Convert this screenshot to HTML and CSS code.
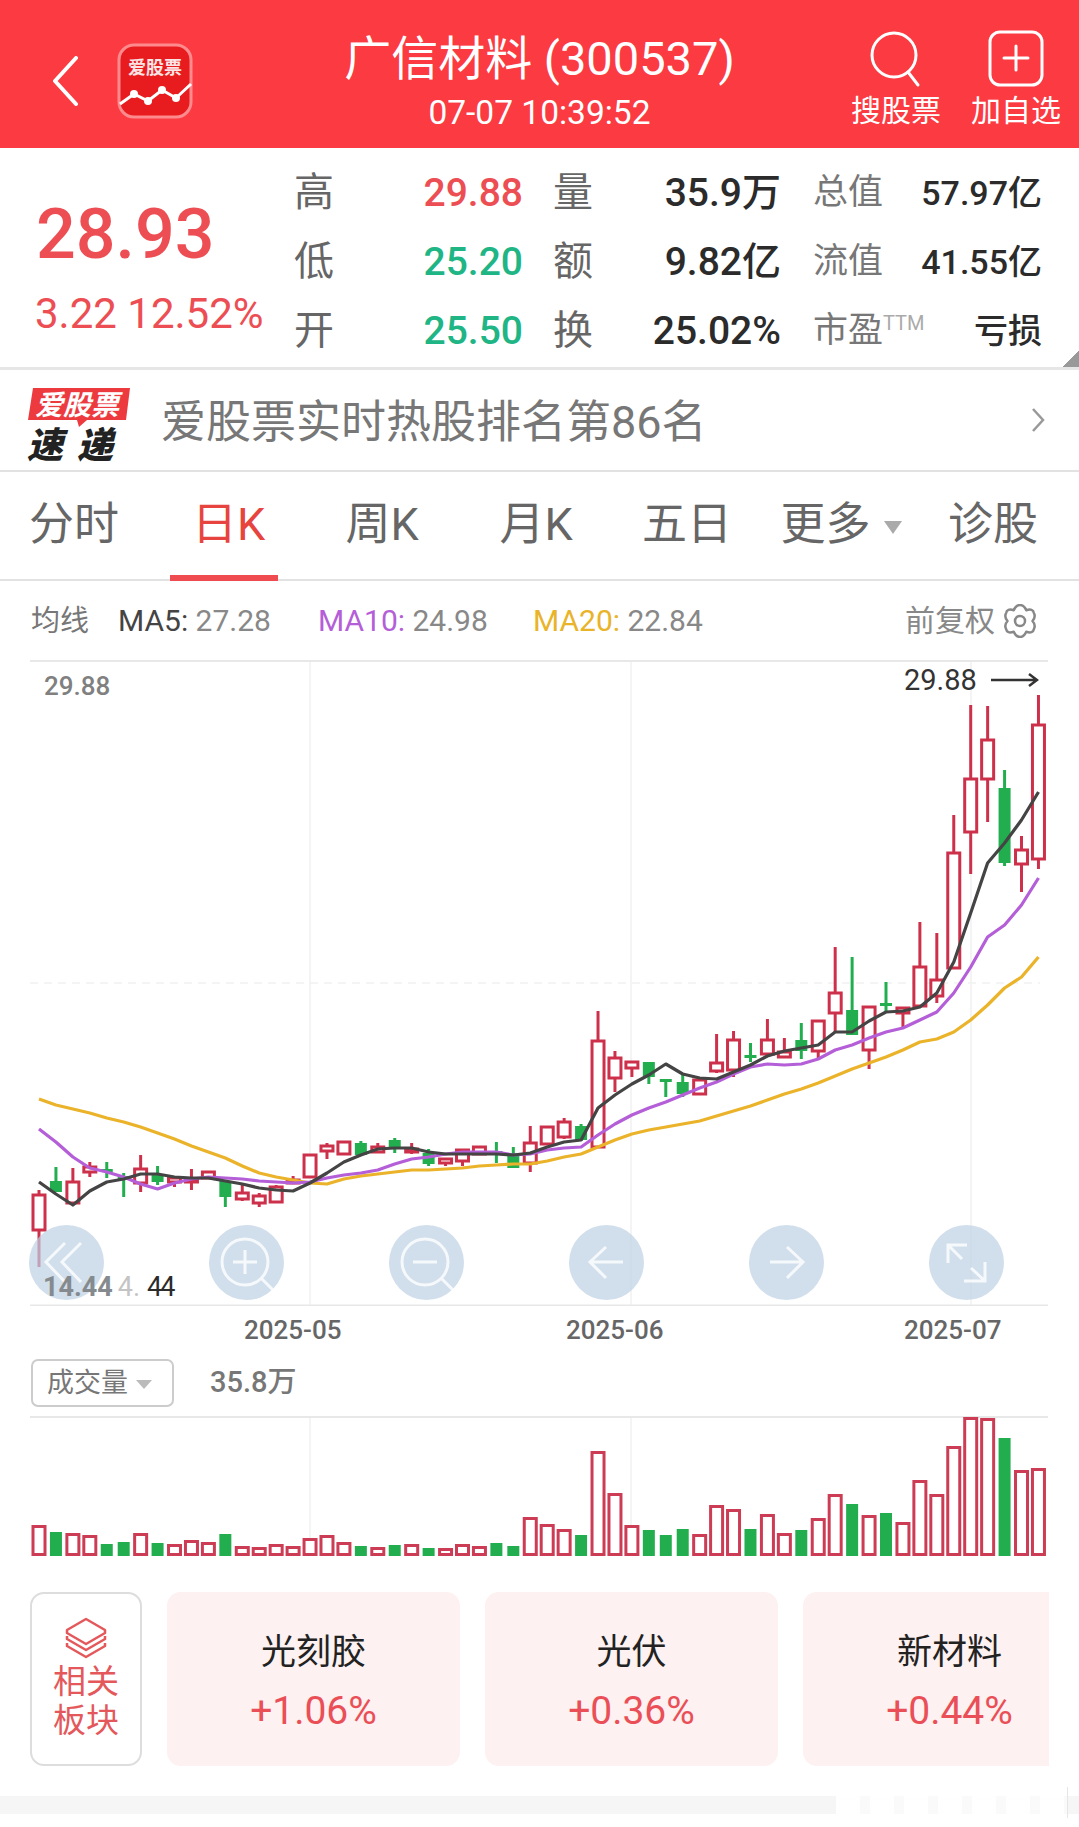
FILE: index.html
```html
<!DOCTYPE html>
<html lang="zh-CN">
<head>
  <meta charset="UTF-8" />
  <meta name="viewport" content="width=device-width, initial-scale=1.0"/>
  <title>广信材料 (300537)</title>
  <link rel="stylesheet" href="styles.css">
</head>
<body>
  <header class="topbar">
    <div class="topbar-left">
      <svg class="back" viewBox="0 0 26 50"><path d="M24 2 L3 25 L24 48"/></svg>
      <svg class="app-logo" viewBox="0 0 76 76">
        <rect class="app-logo-bg" x="2" y="2" width="72" height="72" rx="15"/>
        <text class="app-logo-text" x="38" y="31">爱股票</text>
        <polyline class="app-logo-line" points="3,61 17,51 31,58 45,47 59,55 74,41"/>
        <circle class="app-logo-dot" cx="17" cy="51" r="4"/>
        <circle class="app-logo-dot" cx="31" cy="58" r="4"/>
        <circle class="app-logo-dot" cx="45" cy="47" r="4"/>
        <circle class="app-logo-dot" cx="59" cy="55" r="4"/>
      </svg>
    </div>
    <div class="topbar-title">
      <div class="stock-name">广信材料 (300537)</div>
      <div class="stock-time">07-07 10:39:52</div>
    </div>
    <div class="topbar-actions">
      <div class="action">
        <svg class="action-icon" viewBox="0 0 60 60"><circle cx="28" cy="26" r="22"/><path d="M42 43 L52 56"/></svg>
        <span>搜股票</span>
      </div>
      <div class="action">
        <svg class="action-icon" viewBox="0 0 60 60"><rect x="4" y="3" width="52" height="53" rx="10"/><path d="M30 17 V41 M18 29 H42"/></svg>
        <span>加自选</span>
      </div>
    </div>
  </header>

  <section class="quote">
    <div class="quote-main">
      <div class="price">28.93</div>
      <div class="change">3.22 12.52%</div>
    </div>
    <div class="quote-grid">
      <div class="cell"><span class="lbl">高</span><span class="val up">29.88</span></div>
      <div class="cell"><span class="lbl">量</span><span class="val">35.9万</span></div>
      <div class="cell small"><span class="lbl">总值</span><span class="val">57.97亿</span></div>
      <div class="cell"><span class="lbl">低</span><span class="val down">25.20</span></div>
      <div class="cell"><span class="lbl">额</span><span class="val">9.82亿</span></div>
      <div class="cell small"><span class="lbl">流值</span><span class="val">41.55亿</span></div>
      <div class="cell"><span class="lbl">开</span><span class="val down">25.50</span></div>
      <div class="cell"><span class="lbl">换</span><span class="val">25.02%</span></div>
      <div class="cell small"><span class="lbl">市盈<sup>TTM</sup></span><span class="val">亏损</span></div>
    </div>
    <div class="corner"></div>
  </section>

  <section class="hot">
    <svg class="hot-logo" viewBox="0 0 104 84">
      <path class="hot-bubble" d="M6 0 H103 L99 32 H60 L52 39 L50 32 H1 Z"/>
      <text class="hot-brand" x="8" y="27">爱股票</text>
      <text class="hot-brand-black" x="0" y="70">速</text>
      <text class="hot-brand-black" x="50" y="70">递</text>
    </svg>
    <div class="hot-text">爱股票实时热股排名第86名</div>
    <svg class="hot-arrow" viewBox="0 0 16 26"><path d="M3 2 L13 13 L3 24"/></svg>
  </section>

  <nav class="tabs">
    <div class="tab">分时</div>
    <div class="tab active">日K</div>
    <div class="tab">周K</div>
    <div class="tab">月K</div>
    <div class="tab">五日</div>
    <div class="tab">更多<i class="tab-caret"></i></div>
    <div class="tab">诊股</div>
  </nav>

  <div class="legend">
    <span class="legend-title">均线</span>
    <span class="legend-item ma5">MA5: <b>27.28</b></span>
    <span class="legend-item ma10">MA10: <b>24.98</b></span>
    <span class="legend-item ma20">MA20: <b>22.84</b></span>
    <span class="legend-adjust">前复权
      <svg class="gear" viewBox="0 0 34 34"><path d="M10.75 6.2 Q13 1 17 1 Q21 1 23.25 6.2 Q30 4 30.9 9 Q33 13 29.5 17 Q33 21 30.9 25 Q30 30 23.25 27.8 Q21 33 17 33 Q13 33 10.75 27.8 Q4 30 3.1 25 Q1 21 4.5 17 Q1 13 3.1 9 Q4 4 10.75 6.2 Z"/><circle cx="17" cy="17" r="5"/></svg>
    </span>
  </div>

  <section class="chart">
    <svg id="kline" class="chart-svg" viewBox="0 660 1079 646"></svg>
    <span class="chart-high">29.88</span>
    <span class="chart-max">29.88
      <svg class="max-arrow" viewBox="0 0 48 14"><path d="M0 7 H46 M38 1 L46 7 L38 13"/></svg>
    </span>
    <div class="chart-tools">
      <svg class="tool" viewBox="0 0 75 75"><circle class="tool-bg" cx="37.5" cy="37.5" r="37.5"/><path d="M36 18 L17 37 L36 57 M52 18 L33 37 L52 57"/></svg>
      <svg class="tool" viewBox="0 0 75 75"><circle class="tool-bg" cx="37.5" cy="37.5" r="37.5"/><circle cx="36" cy="37" r="23"/><path d="M24 37 H48 M36 25 V49 M53 54 L65 66"/></svg>
      <svg class="tool" viewBox="0 0 75 75"><circle class="tool-bg" cx="37.5" cy="37.5" r="37.5"/><circle cx="36" cy="37" r="23"/><path d="M24 37 H48 M53 54 L65 66"/></svg>
      <svg class="tool" viewBox="0 0 75 75"><circle class="tool-bg" cx="37.5" cy="37.5" r="37.5"/><path d="M37 22 L21 37 L37 53 M21 37 H54"/></svg>
      <svg class="tool" viewBox="0 0 75 75"><circle class="tool-bg" cx="37.5" cy="37.5" r="37.5"/><path d="M38 22 L54 37 L38 53 M54 37 H21"/></svg>
      <svg class="tool" viewBox="0 0 75 75"><circle class="tool-bg" cx="37.5" cy="37.5" r="37.5"/><path d="M38 20 H19 V38 M19 20 L33 34 M35 56 H56 V37 M56 56 L42 43"/></svg>
    </div>
    <span class="chart-low"><span class="low-a">14.44</span><span class="low-b">4.</span><span class="low-c">44</span></span>
  </section>

  <div class="dates">
    <span class="date d5">2025-05</span>
    <span class="date d6">2025-06</span>
    <span class="date d7">2025-07</span>
  </div>

  <div class="vol-head">
    <div class="vol-select">成交量<i class="vol-caret"></i></div>
    <div class="vol-value">35.8万</div>
  </div>
  <svg id="volume" class="vol-svg" viewBox="0 1416 1079 142"></svg>

  <section class="sectors">
    <div class="sector-btn">
      <svg class="stack" viewBox="0 0 44 42"><path d="M22 2 L41 13 V16 L22 27 L3 16 V13 Z"/><path d="M3 19 V22 L22 33 L41 22 V19"/><path d="M3 26 V29 L22 40 L41 29 V26"/></svg>
      <div>相关<br>板块</div>
    </div>
    <div class="sector-list">
      <div class="sector"><div class="sector-name">光刻胶</div><div class="sector-pct">+1.06%</div></div>
      <div class="sector"><div class="sector-name">光伏</div><div class="sector-pct">+0.36%</div></div>
      <div class="sector"><div class="sector-name">新材料</div><div class="sector-pct">+0.44%</div></div>
    </div>
  </section>

  <footer class="bottom-bar"><div class="watermark"></div></footer>

  <script src="chart.js"></script>
</body>
</html>
```

FILE: styles.css
```css
* {
  box-sizing: border-box;
}
html, body {
  margin: 0;
  padding: 0;
}
body {
  width: 1079px;
  height: 1827px;
  overflow: hidden;
  background: #fff;
  font-family: Roboto, "Noto Sans CJK SC", sans-serif;
  color: #2b2b2b;
}

/* top bar */
.topbar {
  height: 148px;
  background: #fb3a42;
  color: #fff;
  display: grid;
  grid-template-columns: 250px 1fr 250px;
}
.topbar-left {
  display: flex;
  align-items: center;
  padding: 14px 0 0 52px;
  gap: 39px;
}
.back {
  width: 26px;
  height: 50px;
  fill: none;
  stroke: #fff;
  stroke-width: 4;
  stroke-linecap: round;
  stroke-linejoin: round;
}
.app-logo {
  width: 76px;
  height: 76px;
}
.app-logo-bg {
  fill: #e81b1e;
  stroke: #fd8b8e;
  stroke-width: 3;
}
.app-logo-text {
  fill: #fbe4e4;
  font-size: 18px;
  font-weight: 700;
  text-anchor: middle;
}
.app-logo-line {
  fill: none;
  stroke: #fff;
  stroke-width: 3;
}
.app-logo-dot {
  fill: #fff;
}
.topbar-title {
  text-align: center;
  padding-top: 25px;
}
.stock-name {
  font-size: 47px;
  line-height: 68px;
}
.stock-time {
  font-size: 33.5px;
  line-height: 40px;
}
.topbar-actions {
  display: flex;
  justify-content: flex-end;
  padding-right: 3px;
}
.action {
  width: 120px;
  display: flex;
  flex-direction: column;
  align-items: center;
  padding-top: 29px;
  font-size: 30px;
  line-height: 44px;
}
.action-icon {
  width: 60px;
  height: 60px;
  fill: none;
  stroke: #fff;
  stroke-width: 3;
  stroke-linecap: round;
}

/* quote */
.quote {
  position: relative;
  height: 222px;
  display: flex;
  border-bottom: 3px solid #e6e6e6;
}
.quote-main {
  width: 296px;
  padding: 42px 0 0 35px;
  color: #ec4e53;
}
.price {
  font-size: 70px;
  font-weight: 500;
  line-height: 88px;
  padding-left: 1px;
}
.change {
  font-size: 42px;
  line-height: 56px;
  margin-top: 8px;
  white-space: nowrap;
}
.quote-grid {
  padding-top: 10px;
  display: grid;
  grid-template-columns: 227px 226px 229px;
  grid-auto-rows: 69px;
  column-gap: 32px;
}
.cell {
  display: flex;
  justify-content: space-between;
  align-items: center;
}
.lbl {
  font-size: 40px;
  line-height: 44px;
  color: #666;
  margin-left: -2px;
}
.val {
  font-size: 39px;
  line-height: 44px;
  font-weight: 500;
  white-space: nowrap;
}
.small .lbl {
  font-size: 35px;
  color: #777;
  margin-left: 0;
}
.small .val {
  font-size: 34px;
}
.lbl sup {
  font-size: 20px;
  color: #aaa;
  line-height: 0;
  vertical-align: 12px;
}
.up {
  color: #ec4e53;
}
.down {
  color: #1fb585;
}
.corner {
  position: absolute;
  right: 0;
  bottom: 0;
  width: 17px;
  height: 17px;
  background: linear-gradient(135deg, transparent 50%, #999 50%);
}

/* hot row */
.hot {
  height: 102px;
  display: flex;
  align-items: center;
  padding-left: 27px;
  border-bottom: 2px solid #e2e2e2;
}
.hot-logo {
  width: 104px;
  height: 84px;
  margin-top: 20px;
}
.hot-bubble {
  fill: #ec3a3f;
}
.hot-brand {
  fill: #fff;
  font-size: 28px;
  font-weight: 700;
  font-style: italic;
}
.hot-brand-black {
  fill: #222;
  font-size: 36px;
  font-weight: 900;
  font-style: italic;
}
.hot-text {
  font-size: 45px;
  line-height: 60px;
  color: #777;
  margin: 5px 0 0 30px;
  flex: 1;
}
.hot-arrow {
  width: 16px;
  height: 26px;
  margin-right: 33px;
  fill: none;
  stroke: #999;
  stroke-width: 2.5;
}

/* tabs */
.tabs {
  height: 109px;
  display: grid;
  grid-template-columns: 148px 161px 146px 162px 140px 168px 136px;
  border-bottom: 2px solid #e2e2e2;
}
.tab {
  position: relative;
  text-align: center;
  font-size: 45px;
  line-height: 106px;
  color: #666;
  white-space: nowrap;
}
.tab.active {
  color: #e8443f;
}
.tab.active::after {
  content: "";
  position: absolute;
  left: 22px;
  bottom: -2px;
  width: 108px;
  height: 6px;
  background: #ee4c50;
}
.tab-caret {
  display: inline-block;
  margin-left: 13px;
  vertical-align: 6px;
  border-left: 9px solid transparent;
  border-right: 9px solid transparent;
  border-top: 13px solid #aaa;
}

/* ma legend */
.legend {
  height: 79px;
  display: flex;
  align-items: center;
  padding: 0 42px 0 31px;
  font-size: 30px;
  line-height: 40px;
  white-space: nowrap;
}
.legend-title {
  width: 87px;
  font-size: 29px;
  color: #777;
}
.legend-item b {
  font-weight: 400;
  color: #888;
}
.ma5 {
  width: 200px;
  color: #444;
}
.ma10 {
  width: 215px;
  color: #b45ed8;
}
.ma20 {
  color: #e9b32a;
}
.legend-adjust {
  margin-left: auto;
  display: flex;
  align-items: center;
  gap: 8px;
  color: #888;
}
.gear {
  width: 34px;
  height: 34px;
  fill: none;
  stroke: #888;
  stroke-width: 2.5;
  stroke-linejoin: round;
}

/* kline */
.chart {
  position: relative;
  height: 646px;
}
.chart-svg,
.vol-svg {
  display: block;
  width: 1079px;
}
.chart-svg {
  height: 646px;
}
.vol-svg {
  height: 142px;
}
.grid {
  stroke: #f1f1f1;
  stroke-width: 1.5;
}
.grid-dash {
  stroke-dasharray: 8 6;
}
.grid-edge {
  stroke: #e8e8e8;
  stroke-width: 2;
}
.candle-up {
  fill: #fff;
  stroke: #cd304a;
  stroke-width: 3;
}
.wick-up {
  stroke: #cd304a;
  stroke-width: 3;
}
.candle-down {
  fill: #22ae4f;
  stroke: #22ae4f;
  stroke-width: 2;
}
.wick-down {
  stroke: #22ae4f;
  stroke-width: 3;
}
.line {
  fill: none;
  stroke-width: 3.2;
  stroke-linejoin: round;
}
.line-ma5 {
  stroke: #444;
}
.line-ma10 {
  stroke: #b45ed8;
}
.line-ma20 {
  stroke: #eab32a;
}
.chart-high {
  position: absolute;
  left: 44px;
  top: 11px;
  font-size: 26px;
  font-weight: 500;
  color: #808080;
}
.chart-max {
  position: absolute;
  left: 904px;
  top: 3px;
  font-size: 29px;
  color: #333;
  display: flex;
  align-items: center;
  gap: 14px;
}
.max-arrow {
  width: 48px;
  height: 14px;
  fill: none;
  stroke: #333;
  stroke-width: 2.5;
}
.chart-tools {
  position: absolute;
  left: 29px;
  top: 565px;
  display: flex;
  gap: 105px;
}
.tool {
  width: 75px;
  height: 75px;
  fill: none;
  stroke: rgba(255, 255, 255, 0.8);
  stroke-width: 3;
}
.tool .tool-bg {
  fill: rgba(190, 208, 226, 0.7);
  stroke: none;
}
.chart-low {
  position: absolute;
  left: 43px;
  top: 609px;
  font-size: 27px;
  line-height: 36px;
  white-space: nowrap;
}
.low-a {
  color: #858a8e;
  font-weight: 700;
}
.low-b {
  color: #c4c4c4;
  margin: 0 7px 0 5px;
}
.low-c {
  color: #2b2b2b;
  letter-spacing: -2px;
}

/* dates */
.dates {
  height: 44px;
  position: relative;
}
.date {
  position: absolute;
  top: 9px;
  font-size: 26px;
  font-weight: 500;
  color: #666;
}
.d5 {
  left: 244px;
}
.d6 {
  left: 566px;
}
.d7 {
  left: 904px;
}

/* volume */
.vol-head {
  height: 66px;
  display: flex;
  align-items: flex-start;
  padding: 9px 0 0 31px;
}
.vol-select {
  width: 143px;
  height: 48px;
  border: 2px solid #ccc;
  border-radius: 7px;
  padding-left: 14px;
  font-size: 27px;
  line-height: 44px;
  color: #777;
  white-space: nowrap;
}
.vol-caret {
  display: inline-block;
  margin-left: 8px;
  vertical-align: 3px;
  border-left: 8px solid transparent;
  border-right: 8px solid transparent;
  border-top: 9px solid #bbb;
}
.vol-value {
  margin-left: 36px;
  font-size: 29px;
  font-weight: 500;
  line-height: 46px;
  color: #777;
}
.vol-up {
  fill: #fff;
  stroke: #cd3c55;
  stroke-width: 3;
}
.vol-down {
  fill: #22ae4f;
}

/* sectors */
.sectors {
  margin-top: 34px;
  padding-left: 30px;
  width: 1049px;
  height: 174px;
  display: flex;
  gap: 25px;
  overflow: hidden;
}
.sector-btn {
  flex: none;
  width: 112px;
  border: 2px solid #ddd;
  border-radius: 14px;
  text-align: center;
  color: #e4575a;
  font-size: 33px;
  line-height: 39px;
  padding-top: 23px;
}
.stack {
  display: block;
  width: 44px;
  height: 42px;
  margin: 0 auto 3px;
  fill: none;
  stroke: #e4575a;
  stroke-width: 2.5;
  stroke-linejoin: round;
}
.sector-list {
  display: flex;
  gap: 25px;
}
.sector {
  flex: none;
  width: 293px;
  border-radius: 14px;
  background: #fdf1f1;
  text-align: center;
  padding-top: 38px;
}
.sector-name {
  font-size: 35px;
  line-height: 46px;
  color: #222;
}
.sector-pct {
  font-size: 39px;
  line-height: 46px;
  margin-top: 12px;
  color: #ea4f57;
}

/* bottom */
.bottom-bar {
  position: relative;
  margin-top: 30px;
  height: 18px;
  background: #f6f6f6;
}
.watermark {
  position: absolute;
  left: 836px;
  top: -9px;
  width: 232px;
  height: 31px;
  border-right: 1px solid #e6e6e6;
  background: repeating-linear-gradient(90deg, rgba(255, 255, 255, 0.95) 0 24px, rgba(255, 255, 255, 0.45) 24px 34px);
}
```

FILE: chart.js
```js
// x position of each daily bar, 60 bars across the chart
function barX(i) {
  return 39 + i * 16.94;
}

// [body top, body bottom, wick top, wick bottom, 1 = up / 0 = down]
const candles = [
  [1195,1230,1190,1267,1],[1182,1191,1167,1192,0],[1182,1203,1168,1205,1],[1167,1172,1162,1177,1],
  [1170,1171,1162,1178,0],[1177,1178,1173,1197,0],[1169,1183,1155,1192,1],[1175,1181,1166,1185,0],
  [1178,1182,1177,1187,1],[1179,1182,1169,1190,1],[1172,1178,1171,1179,1],[1182,1196,1180,1207,0],
  [1193,1199,1185,1201,1],[1196,1203,1193,1207,1],[1187,1202,1185,1203,1],[1180,1183,1176,1183,1],
  [1155,1177,1155,1177,1],[1146,1151,1143,1159,1],[1142,1154,1142,1154,1],[1144,1154,1141,1155,0],
  [1147,1152,1143,1153,1],[1141,1148,1138,1153,0],[1149,1152,1143,1154,1],[1154,1163,1149,1166,0],
  [1159,1163,1159,1166,1],[1150,1161,1149,1166,1],[1147,1154,1146,1155,1],[1152,1153,1142,1163,0],
  [1157,1167,1147,1168,0],[1143,1163,1126,1172,1],[1127,1144,1127,1145,1],[1122,1137,1118,1139,1],
  [1127,1139,1124,1141,0],[1041,1147,1011,1147,1],[1058,1078,1051,1092,1],[1062,1068,1062,1077,1],
  [1063,1076,1063,1084,0],[1080,1081,1080,1097,0],[1083,1093,1073,1097,0],[1080,1094,1077,1095,1],
  [1063,1071,1034,1073,1],[1040,1070,1031,1077,1],[1056,1057,1043,1062,0],[1040,1054,1019,1055,1],
  [1052,1057,1038,1058,1],[1041,1050,1023,1059,0],[1021,1051,1021,1060,1],[993,1013,947,1032,1],
  [1011,1034,957,1035,0],[1007,1050,1006,1069,1],[1004,1005,982,1012,0],[1008,1013,1007,1027,1],
  [967,1006,922,1007,1],[980,996,933,1003,1],[853,968,815,969,1],[779,832,705,874,1],
  [740,779,706,822,1],[789,862,770,866,0],[850,864,836,892,1],[725,859,695,869,1]
];

const ma5 = [1182,1194,1205,1191,1182,1179,1174,1174,1177,1178,1178,1181,1184,1188,1190,1191,1183,1173,1162,1155,
  1149,1148,1148,1152,1154,1154,1154,1154,1155,1153,1147,1142,1140,1108,1095,1084,1075,1064,1074,1078,
  1079,1072,1065,1056,1051,1048,1045,1032,1032,1021,1012,1011,1007,993,962,913,863,843,820,792];
const ma10 = [1129,1142,1157,1168,1172,1177,1184,1189,1183,1179,1177,1178,1179,1181,1182,1183,1182,1178,1175,1173,
  1170,1164,1159,1157,1154,1152,1152,1152,1155,1154,1150,1148,1147,1135,1124,1115,1108,1102,1095,1088,
  1082,1074,1067,1064,1065,1064,1059,1050,1045,1038,1032,1028,1020,1012,993,967,937,925,905,878];
const ma20 = [1099,1105,1109,1113,1118,1122,1127,1133,1139,1146,1152,1158,1166,1173,1177,1180,1183,1184,1179,1176,
  1174,1172,1170,1170,1169,1168,1166,1165,1164,1164,1161,1157,1154,1147,1140,1134,1130,1127,1124,1121,
  1116,1111,1106,1100,1094,1089,1083,1076,1069,1063,1057,1050,1042,1039,1032,1020,1005,988,977,957];

// height of each volume bar in px, and whether the day closed up
const volumes = [31,24,23,21,12,14,23,13,12,16,14,22,10,9,12,10,18,21,14,10,9,11,12,8,8,12,10,13,10,39,
  32,27,21,105,63,31,26,21,27,22,51,47,27,42,23,26,38,62,52,41,43,34,76,62,110,139,138,118,86,88];
const volBase = 1556;

function gridLines(top, bottom) {
  return [310, 631, 971].map(x =>
    `<line class="grid" x1="${x}" x2="${x}" y1="${top}" y2="${bottom}"/>`).join('');
}

function polyline(values, cls) {
  const points = values.map((y, i) => barX(i).toFixed(1) + ',' + y).join(' ');
  return `<polyline class="line ${cls}" points="${points}"/>`;
}

function drawKline() {
  let html = gridLines(660, 1306);
  html += '<line class="grid grid-edge" x1="30" x2="1048" y1="661" y2="661"/>';
  html += '<line class="grid grid-dash" x1="30" x2="1040" y1="983" y2="983"/>';
  html += '<line class="grid grid-edge" x1="30" x2="1048" y1="1305.5" y2="1305.5"/>';

  candles.forEach((c, i) => {
    const x = barX(i);
    const kind = c[4] ? 'up' : 'down';
    const w = c[4] ? 12 : 10;
    html += `<line class="wick-${kind}" x1="${x}" x2="${x}" y1="${c[2]}" y2="${c[3]}"/>`;
    html += `<rect class="candle-${kind}" x="${x - w / 2}" y="${c[0]}" width="${w}" height="${c[1] - c[0]}"/>`;
  });

  html += polyline(ma20, 'line-ma20') + polyline(ma10, 'line-ma10') + polyline(ma5, 'line-ma5');
  document.getElementById('kline').innerHTML = html;
}

function drawVolume() {
  let html = gridLines(1416, volBase);
  html += '<line class="grid grid-edge" x1="30" x2="1048" y1="1417" y2="1417"/>';
  volumes.forEach((h, i) => {
    const x = barX(i);
    if (candles[i][4]) {
      html += `<rect class="vol-up" x="${x - 6}" y="${volBase - h + 1.5}" width="12" height="${h - 3}"/>`;
    } else {
      html += `<rect class="vol-down" x="${x - 6}" y="${volBase - h}" width="12" height="${h}"/>`;
    }
  });
  document.getElementById('volume').innerHTML = html;
}

drawKline();
drawVolume();
```
